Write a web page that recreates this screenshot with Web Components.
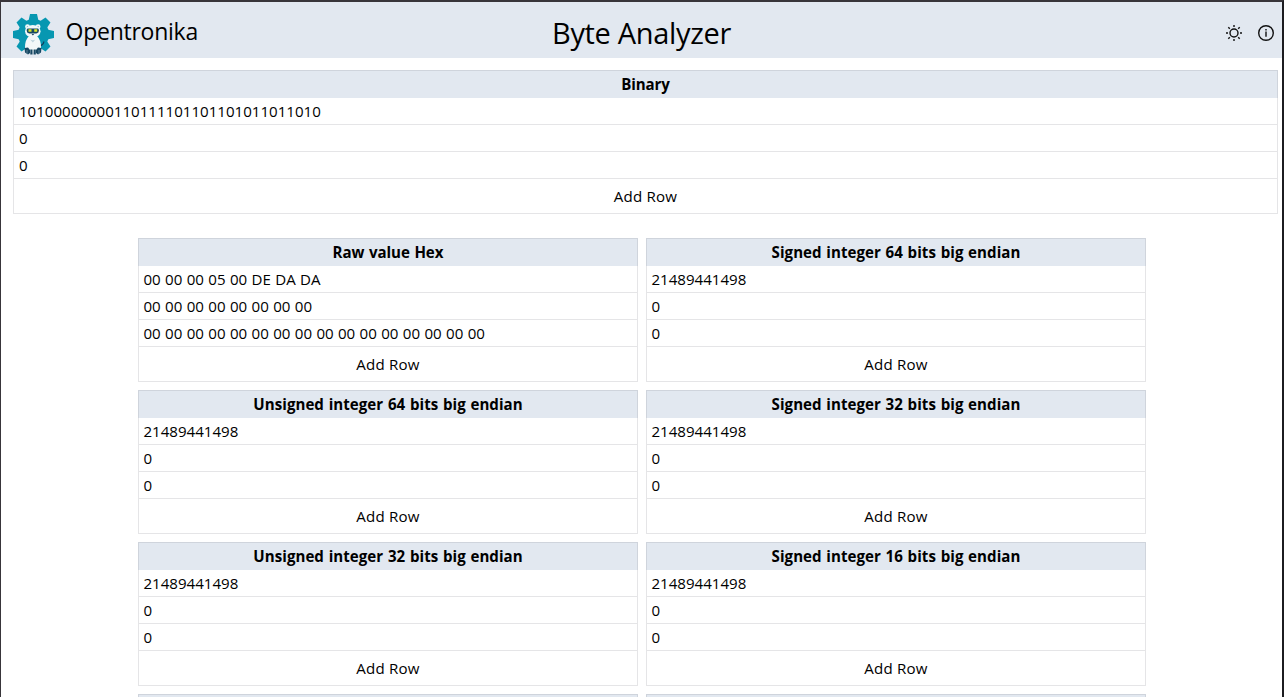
<!DOCTYPE html>
<html lang="en">
<head>
<meta charset="utf-8">
<title>Byte Analyzer</title>
<style>
html,body{margin:0;height:100%;overflow:hidden}
body{font:15.08px/26px "Open Sans","Noto Sans",sans-serif;color:#000;background:#fff}
</style>
</head>
<body>
<byte-app></byte-app>
<script>
const define = (name, html, setup) => customElements.define(name, class extends HTMLElement {
  constructor() {
    super();
    this.attachShadow({mode: "open"});
  }
  connectedCallback() {
    this.shadowRoot.innerHTML = html;
    if (setup) setup(this, this.shadowRoot);
  }
});

define("bear-logo", `
<style>:host{display:block;width:42px;height:42px}svg{display:block}</style>
<svg width="42" height="42" viewBox="0 0 42 42">
  <g fill="#0797b1">
    <circle cx="20.5" cy="20.5" r="15.5"/>
    <path d="M17 0h7l1.500 7h-10z"/>
    <path d="M17 0h7l1.500 7h-10z" transform="rotate(45 20.5 20.5)"/>
    <path d="M17 0h7l1.500 7h-10z" transform="rotate(90 20.5 20.5)"/>
    <path d="M17 0h7l1.500 7h-10z" transform="rotate(135 20.5 20.5)"/>
    <path d="M17 0h7l1.500 7h-10z" transform="rotate(225 20.5 20.5)"/>
    <path d="M17 0h7l1.500 7h-10z" transform="rotate(270 20.5 20.5)"/>
    <path d="M17 0h7l1.500 7h-10z" transform="rotate(315 20.5 20.5)"/>
  </g>
  <path d="M27 31.500q3 0 4-4" fill="none" stroke="#123f5c" stroke-width="1.100"/>
  <path d="M16 22h8q4 4 4 11v3l-2 2H14l-2-2v-3q0-7 4-11z" fill="#f2f8f9"/>
  <circle cx="14.500" cy="12.700" r="2.400" fill="#f2f8f9"/><circle cx="25.100" cy="12.700" r="2.400" fill="#f2f8f9"/>
  <circle cx="14.600" cy="12.900" r=".9" fill="#7dbcc9"/><circle cx="25" cy="12.900" r=".9" fill="#7dbcc9"/>
  <ellipse cx="19.800" cy="17.300" rx="7.800" ry="6.200" fill="#f2f8f9"/>
  <path d="M14.500 14.500h10.600l.9 1.500-.6 2.500-2 1h-7.200l-2-1-.6-2.500z" fill="#174863"/>
  <path d="M15.500 15.200h3v2.600h-3zM21.200 15.200h3v2.600h-3z" fill="#d8e32a"/>
  <path d="M18.600 20h2.600l-1.300 1.500z" fill="#123f5c"/>
  <path d="M17.200 25.500q2.600 1.500 5.200 0l-2.600 3z" fill="#bed4de"/>
  <path d="M11.500 34l3.500-.5 2 2.500v3l-2 1.500-3-2zM28.500 34l-3.500-.5-2 2.500v3l2 1.500 3-2zM17.300 35.500h2.200v5h-2.200zM20.600 35.500h2.200v5h-2.200z" fill="#174863"/>
  <path d="M14 36v4M26 36v4" stroke="#7499ac" stroke-width=".7"/>
</svg>`);

define("sun-icon", `
<style>:host{display:block;width:16px;height:16px}svg{display:block}</style>
<svg width="16" height="16" viewBox="0 0 16 16" fill="none" stroke="#111" stroke-width="1.400">
  <circle cx="8" cy="8" r="4"/>
  <path d="M8 0v2M8 14v2M0 8h2M14 8h2M2.300 2.300l1.500 1.500M12.200 12.200l1.500 1.500M2.300 13.700l1.500-1.500M12.200 3.800l1.500-1.500"/>
</svg>`);

define("info-icon", `
<style>:host{display:block;width:16px;height:16px}svg{display:block}</style>
<svg width="16" height="16" viewBox="0 0 16 16" fill="none" stroke="#111">
  <circle cx="8" cy="8" r="7.300" stroke-width="1.400"/>
  <path d="M8 6.500v5.300M8 4v1.500" stroke-width="1.400"/>
</svg>`);

define("app-header", `
<style>
:host{display:grid;grid-template-columns:1fr auto 1fr;align-items:center;height:56px;background:#e2e8f0;padding:0 8px 0 12px;box-sizing:border-box}
.brand{display:flex;align-items:center;gap:10.5px;font-size:23px;line-height:32px}
.brand span{margin-top:1px;letter-spacing:-.25px}
.brand bear-logo{margin-top:9px}
h1{margin:6px 4px 0 0;font-size:29px;font-weight:400;line-height:36px;letter-spacing:-.33px}
.tools{display:flex;justify-content:flex-end;gap:16px;margin-top:6px}
</style>
<div class="brand"><bear-logo></bear-logo><span>Opentronika</span></div>
<h1><slot></slot></h1>
<div class="tools"><sun-icon></sun-icon><info-icon></info-icon></div>`);

define("value-table", `
<style>
:host{display:block;height:144px}
.head{box-sizing:border-box;height:28px;border:1px solid #cfd4dc;border-bottom:0;background:#e2e8f0;text-align:center;font-weight:700;line-height:27px;letter-spacing:var(--head-spacing,.05px);word-spacing:.7px}
.rows{border:1px solid #e5e5e7;border-top:0}
.row{height:26px;border-bottom:1px solid #e5e5e7;padding-left:var(--row-inset,4.5px);line-height:26px;word-spacing:.45px}
.add{height:34px;line-height:34px;text-align:center;letter-spacing:.2px}
</style>
<div class="head"></div><div class="rows"></div>`, (el, root) => {
  root.querySelector(".head").textContent = el.getAttribute("heading");
  if (!el.hasAttribute("values")) return;
  const rows = root.querySelector(".rows");
  for (const v of el.getAttribute("values").split("|")) {
    const d = document.createElement("div");
    d.className = "row";
    d.textContent = v;
    rows.append(d);
  }
  const add = document.createElement("div");
  add.className = "add";
  add.textContent = "Add Row";
  rows.append(add);
});

define("byte-app", `
<style>
:host{display:block;box-sizing:border-box;height:100vh;overflow:hidden;border:solid #38353a;border-width:2px 2px 0 1px;border-right-color:#1c1c20}
.wide{margin:12px 4px 24px 12px;--row-inset:5px;--head-spacing:-.1px}
.short{--head-spacing:-.05px}
.grid{display:grid;grid-template-columns:500px 500px;gap:8px;margin-left:137px}
</style>
<app-header>Byte Analyzer</app-header>
<value-table class="wide" heading="Binary" values="10100000000110111101101101011011010|0|0"></value-table>
<div class="grid">
  <value-table class="short" heading="Raw value Hex" values="00 00 00 05 00 DE DA DA|00 00 00 00 00 00 00 00|00 00 00 00 00 00 00 00 00 00 00 00 00 00 00 00"></value-table>
  <value-table heading="Signed integer 64 bits big endian" values="21489441498|0|0"></value-table>
  <value-table heading="Unsigned integer 64 bits big endian" values="21489441498|0|0"></value-table>
  <value-table heading="Signed integer 32 bits big endian" values="21489441498|0|0"></value-table>
  <value-table heading="Unsigned integer 32 bits big endian" values="21489441498|0|0"></value-table>
  <value-table heading="Signed integer 16 bits big endian" values="21489441498|0|0"></value-table>
  <value-table heading=""></value-table>
  <value-table heading=""></value-table>
</div>`);
</script>
</body>
</html>
